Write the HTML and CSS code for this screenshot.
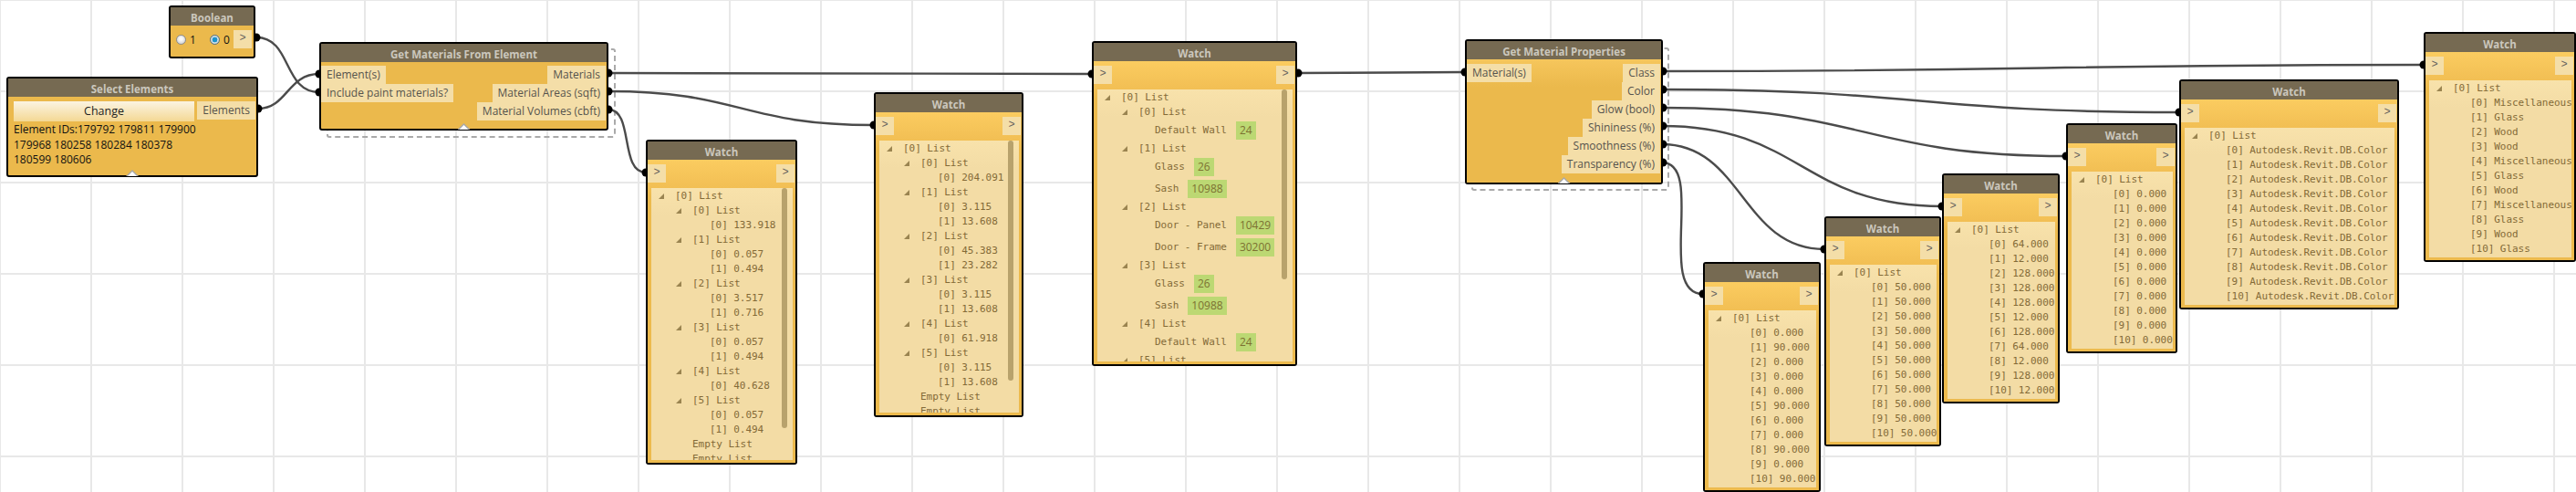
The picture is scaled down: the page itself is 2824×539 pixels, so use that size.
FILE: index.html
```html
<!DOCTYPE html>
<html lang="en">
<head>
  <meta charset="UTF-8">
  <title>Dynamo graph - Get Material Properties</title>
  <link rel="stylesheet" href="styles.css">
</head>
<body>
  <div class="canvas">
    <div class="group group-materials"></div>
    <div class="group group-props"></div>

    <!-- wires sit under the nodes, so only the outer half of each port dot shows -->
    <svg class="wires" width="2824" height="539" viewBox="0 0 2824 539">
      <path d="M281 41 C320 41 310 101 350 101"/>
      <path d="M283 119 C315 119 315 81 350 81"/>
      <path d="M667 80 L1197 81"/>
      <path d="M667 100 C812 100 812 137 958 137"/>
      <path d="M667 120 C695 120 679 189 708 189"/>
      <path d="M1422 80 L1606 79"/>
      <path d="M1822 78 C2240 78 2240 71 2657 71"/>
      <path d="M1822 98 C2105 98 2105 123 2389 123"/>
      <path d="M1822 118 C2043 118 2043 171 2265 171"/>
      <path d="M1822 138 C1975 138 1975 226 2129 226"/>
      <path d="M1822 158 C1910 158 1910 273 2000 273"/>
      <path d="M1822 178 C1870 178 1815 322 1867 322"/>
      <g class="dots">
        <circle cx="281" cy="41" r="4.5"/>
        <circle cx="283" cy="119" r="4.5"/>
        <circle cx="350" cy="81" r="4.5"/>
        <circle cx="350" cy="101" r="4.5"/>
        <circle cx="667" cy="80" r="4.5"/>
        <circle cx="667" cy="100" r="4.5"/>
        <circle cx="667" cy="120" r="4.5"/>
        <circle cx="708" cy="189" r="4.5"/>
        <circle cx="958" cy="137" r="4.5"/>
        <circle cx="1197" cy="81" r="4.5"/>
        <circle cx="1423" cy="80" r="4.5"/>
        <circle cx="1606" cy="79" r="4.5"/>
        <circle cx="1823" cy="78" r="4.5"/>
        <circle cx="1823" cy="98" r="4.5"/>
        <circle cx="1823" cy="118" r="4.5"/>
        <circle cx="1823" cy="138" r="4.5"/>
        <circle cx="1823" cy="158" r="4.5"/>
        <circle cx="1823" cy="178" r="4.5"/>
        <circle cx="1867" cy="322" r="4.5"/>
        <circle cx="2000" cy="273" r="4.5"/>
        <circle cx="2129" cy="226" r="4.5"/>
        <circle cx="2265" cy="171" r="4.5"/>
        <circle cx="2389" cy="123" r="4.5"/>
        <circle cx="2657" cy="71" r="4.5"/>
      </g>
    </svg>

    <div class="node boolean">
      <div class="title">Boolean</div>
      <div class="body boolean-body">
        <span class="radio"></span><span class="radio-label">1</span>
        <span class="radio checked"></span><span class="radio-label">0</span>
        <span class="port arrow">&gt;</span>
      </div>
    </div>

    <div class="node select">
      <div class="title">Select Elements</div>
      <div class="body select-body">
        <div class="select-top">
          <div class="change">Change</div>
          <span class="port">Elements</span>
        </div>
        <p class="ids">Element IDs:179792 179811 179900<br>179968 180258 180284 180378<br>180599 180606</p>
      </div>
      <span class="collapse"></span>
    </div>

    <div class="node materials">
      <div class="title">Get Materials From Element</div>
      <div class="body ports-body">
        <div class="ports ports-in">
          <span class="port">Element(s)</span>
          <span class="port">Include paint materials?</span>
        </div>
        <div class="ports ports-out">
          <span class="port">Materials</span>
          <span class="port">Material Areas (sqft)</span>
          <span class="port">Material Volumes (cbft)</span>
        </div>
      </div>
      <span class="collapse"></span>
    </div>

    <div class="node watch watch-volumes">
      <div class="title">Watch</div>
      <div class="body">
        <div class="watch-ports"><span class="port arrow">&gt;</span><span class="port arrow">&gt;</span></div>
        <div class="panel tall">
          <div class="row lv0 open">[0] List</div>
          <div class="row lv1 open">[0] List</div>
          <div class="row lv2">[0] 133.918</div>
          <div class="row lv1 open">[1] List</div>
          <div class="row lv2">[0] 0.057</div>
          <div class="row lv2">[1] 0.494</div>
          <div class="row lv1 open">[2] List</div>
          <div class="row lv2">[0] 3.517</div>
          <div class="row lv2">[1] 0.716</div>
          <div class="row lv1 open">[3] List</div>
          <div class="row lv2">[0] 0.057</div>
          <div class="row lv2">[1] 0.494</div>
          <div class="row lv1 open">[4] List</div>
          <div class="row lv2">[0] 40.628</div>
          <div class="row lv1 open">[5] List</div>
          <div class="row lv2">[0] 0.057</div>
          <div class="row lv2">[1] 0.494</div>
          <div class="row lv1">Empty List</div>
          <div class="row lv1">Empty List</div>
          <div class="scrollbar bar-long"></div>
        </div>
      </div>
    </div>

    <div class="node watch watch-areas">
      <div class="title">Watch</div>
      <div class="body">
        <div class="watch-ports"><span class="port arrow">&gt;</span><span class="port arrow">&gt;</span></div>
        <div class="panel tall">
          <div class="row lv0 open">[0] List</div>
          <div class="row lv1 open">[0] List</div>
          <div class="row lv2">[0] 204.091</div>
          <div class="row lv1 open">[1] List</div>
          <div class="row lv2">[0] 3.115</div>
          <div class="row lv2">[1] 13.608</div>
          <div class="row lv1 open">[2] List</div>
          <div class="row lv2">[0] 45.383</div>
          <div class="row lv2">[1] 23.282</div>
          <div class="row lv1 open">[3] List</div>
          <div class="row lv2">[0] 3.115</div>
          <div class="row lv2">[1] 13.608</div>
          <div class="row lv1 open">[4] List</div>
          <div class="row lv2">[0] 61.918</div>
          <div class="row lv1 open">[5] List</div>
          <div class="row lv2">[0] 3.115</div>
          <div class="row lv2">[1] 13.608</div>
          <div class="row lv1">Empty List</div>
          <div class="row lv1">Empty List</div>
          <div class="scrollbar bar-long"></div>
        </div>
      </div>
    </div>

    <div class="node watch watch-materials">
      <div class="title">Watch</div>
      <div class="body">
        <div class="watch-ports"><span class="port arrow">&gt;</span><span class="port arrow">&gt;</span></div>
        <div class="panel tall">
          <div class="row lv0 open">[0] List</div>
          <div class="row lv1 open">[0] List</div>
          <div class="row lv2x">Default Wall<span class="chip">24</span></div>
          <div class="row lv1 open">[1] List</div>
          <div class="row lv2x">Glass<span class="chip">26</span></div>
          <div class="row lv2x">Sash<span class="chip">10988</span></div>
          <div class="row lv1 open">[2] List</div>
          <div class="row lv2x">Door - Panel<span class="chip">10429</span></div>
          <div class="row lv2x">Door - Frame<span class="chip">30200</span></div>
          <div class="row lv1 open">[3] List</div>
          <div class="row lv2x">Glass<span class="chip">26</span></div>
          <div class="row lv2x">Sash<span class="chip">10988</span></div>
          <div class="row lv1 open">[4] List</div>
          <div class="row lv2x">Default Wall<span class="chip">24</span></div>
          <div class="row lv1 open">[5] List</div>
          <div class="scrollbar bar-short"></div>
        </div>
      </div>
    </div>

    <div class="node props">
      <div class="title">Get Material Properties</div>
      <div class="body ports-body props-body">
        <div class="ports ports-in">
          <span class="port">Material(s)</span>
        </div>
        <div class="ports ports-out">
          <span class="port">Class</span>
          <span class="port">Color</span>
          <span class="port">Glow (bool)</span>
          <span class="port">Shininess (%)</span>
          <span class="port">Smoothness (%)</span>
          <span class="port">Transparency (%)</span>
        </div>
      </div>
      <span class="collapse"></span>
    </div>

    <div class="node watch watch-transparency">
      <div class="title">Watch</div>
      <div class="body">
        <div class="watch-ports"><span class="port arrow">&gt;</span><span class="port arrow">&gt;</span></div>
        <div class="panel">
          <div class="row lv0 open">[0] List</div>
          <div class="row lv1">[0] 0.000</div>
          <div class="row lv1">[1] 90.000</div>
          <div class="row lv1">[2] 0.000</div>
          <div class="row lv1">[3] 0.000</div>
          <div class="row lv1">[4] 0.000</div>
          <div class="row lv1">[5] 90.000</div>
          <div class="row lv1">[6] 0.000</div>
          <div class="row lv1">[7] 0.000</div>
          <div class="row lv1">[8] 90.000</div>
          <div class="row lv1">[9] 0.000</div>
          <div class="row lv1">[10] 90.000</div>
        </div>
      </div>
    </div>

    <div class="node watch watch-smoothness">
      <div class="title">Watch</div>
      <div class="body">
        <div class="watch-ports"><span class="port arrow">&gt;</span><span class="port arrow">&gt;</span></div>
        <div class="panel">
          <div class="row lv0 open">[0] List</div>
          <div class="row lv1">[0] 50.000</div>
          <div class="row lv1">[1] 50.000</div>
          <div class="row lv1">[2] 50.000</div>
          <div class="row lv1">[3] 50.000</div>
          <div class="row lv1">[4] 50.000</div>
          <div class="row lv1">[5] 50.000</div>
          <div class="row lv1">[6] 50.000</div>
          <div class="row lv1">[7] 50.000</div>
          <div class="row lv1">[8] 50.000</div>
          <div class="row lv1">[9] 50.000</div>
          <div class="row lv1">[10] 50.000</div>
        </div>
      </div>
    </div>

    <div class="node watch watch-shininess">
      <div class="title">Watch</div>
      <div class="body">
        <div class="watch-ports"><span class="port arrow">&gt;</span><span class="port arrow">&gt;</span></div>
        <div class="panel">
          <div class="row lv0 open">[0] List</div>
          <div class="row lv1">[0] 64.000</div>
          <div class="row lv1">[1] 12.000</div>
          <div class="row lv1">[2] 128.000</div>
          <div class="row lv1">[3] 128.000</div>
          <div class="row lv1">[4] 128.000</div>
          <div class="row lv1">[5] 12.000</div>
          <div class="row lv1">[6] 128.000</div>
          <div class="row lv1">[7] 64.000</div>
          <div class="row lv1">[8] 12.000</div>
          <div class="row lv1">[9] 128.000</div>
          <div class="row lv1">[10] 12.000</div>
        </div>
      </div>
    </div>

    <div class="node watch watch-glow">
      <div class="title">Watch</div>
      <div class="body">
        <div class="watch-ports"><span class="port arrow">&gt;</span><span class="port arrow">&gt;</span></div>
        <div class="panel">
          <div class="row lv0 open">[0] List</div>
          <div class="row lv1">[0] 0.000</div>
          <div class="row lv1">[1] 0.000</div>
          <div class="row lv1">[2] 0.000</div>
          <div class="row lv1">[3] 0.000</div>
          <div class="row lv1">[4] 0.000</div>
          <div class="row lv1">[5] 0.000</div>
          <div class="row lv1">[6] 0.000</div>
          <div class="row lv1">[7] 0.000</div>
          <div class="row lv1">[8] 0.000</div>
          <div class="row lv1">[9] 0.000</div>
          <div class="row lv1">[10] 0.000</div>
        </div>
      </div>
    </div>

    <div class="node watch watch-color">
      <div class="title">Watch</div>
      <div class="body">
        <div class="watch-ports"><span class="port arrow">&gt;</span><span class="port arrow">&gt;</span></div>
        <div class="panel">
          <div class="row lv0 open">[0] List</div>
          <div class="row lv1">[0] Autodesk.Revit.DB.Color</div>
          <div class="row lv1">[1] Autodesk.Revit.DB.Color</div>
          <div class="row lv1">[2] Autodesk.Revit.DB.Color</div>
          <div class="row lv1">[3] Autodesk.Revit.DB.Color</div>
          <div class="row lv1">[4] Autodesk.Revit.DB.Color</div>
          <div class="row lv1">[5] Autodesk.Revit.DB.Color</div>
          <div class="row lv1">[6] Autodesk.Revit.DB.Color</div>
          <div class="row lv1">[7] Autodesk.Revit.DB.Color</div>
          <div class="row lv1">[8] Autodesk.Revit.DB.Color</div>
          <div class="row lv1">[9] Autodesk.Revit.DB.Color</div>
          <div class="row lv1">[10] Autodesk.Revit.DB.Color</div>
        </div>
      </div>
    </div>

    <div class="node watch watch-class">
      <div class="title">Watch</div>
      <div class="body">
        <div class="watch-ports"><span class="port arrow">&gt;</span><span class="port arrow">&gt;</span></div>
        <div class="panel">
          <div class="row lv0 open">[0] List</div>
          <div class="row lv1">[0] Miscellaneous</div>
          <div class="row lv1">[1] Glass</div>
          <div class="row lv1">[2] Wood</div>
          <div class="row lv1">[3] Wood</div>
          <div class="row lv1">[4] Miscellaneous</div>
          <div class="row lv1">[5] Glass</div>
          <div class="row lv1">[6] Wood</div>
          <div class="row lv1">[7] Miscellaneous</div>
          <div class="row lv1">[8] Glass</div>
          <div class="row lv1">[9] Wood</div>
          <div class="row lv1">[10] Glass</div>
        </div>
      </div>
    </div>
  </div>
</body>
</html>
```

FILE: styles.css
```css
body {
  margin: 0;
  background: #fff;
  font-family: "Open Sans", "Liberation Sans", sans-serif;
}

.canvas {
  position: relative;
  width: 2824px;
  height: 539px;
  overflow: hidden;
  background-color: #fff;
  background-image:
    linear-gradient(to right, #e8e8e8 2px, transparent 2px),
    linear-gradient(to bottom, #e8e8e8 2px, transparent 2px);
  background-size: 100px 100px;
  background-position: -1px -1px;
}

.wires {
  position: absolute;
  left: 0;
  top: 0;
}

.wires path {
  fill: none;
  stroke: #4b4b4b;
  stroke-width: 2.4;
}

.dots circle {
  fill: #000;
}

/* dashed selection box behind the custom nodes */
.group {
  position: absolute;
  box-sizing: border-box;
  border: 2px dashed #aaa;
  border-radius: 3px;
}

.group-materials { left: 358px; top: 53px; width: 317px; height: 98px; }
.group-props { left: 1613px; top: 52px; width: 217px; height: 157px; }

/* nodes */
.node {
  position: absolute;
  box-sizing: border-box;
  display: flex;
  flex-direction: column;
  border: 2px solid #000;
  border-radius: 3px;
  background: #ebb94c;
}

.title {
  height: 20px;
  line-height: 23px;
  flex: none;
  background: #766a52;
  color: #cbc7bd;
  font-size: 11.5px;
  font-weight: 700;
  text-align: center;
  white-space: nowrap;
}

.body {
  flex: 1;
}

.port {
  display: block;
  height: 20px;
  line-height: 19px;
  padding: 0 6px;
  background: #f4dea8;
  color: #55534d;
  font-size: 12px;
  white-space: nowrap;
}

.port.arrow {
  width: 20px;
  box-sizing: border-box;
  padding: 0;
  text-align: center;
  font-family: "Liberation Mono", monospace;
  font-size: 12px;
  color: #66645e;
}

.collapse {
  position: absolute;
  left: 50%;
  bottom: -1px;
  width: 14px;
  height: 7px;
  margin-left: -7px;
  background: #a8a8a8;
  clip-path: polygon(50% 0, 100% 100%, 0 100%);
}

.collapse::after {
  content: "";
  position: absolute;
  left: 2px;
  top: 2px;
  width: 10px;
  height: 5px;
  background: #fff;
  clip-path: polygon(50% 0, 100% 100%, 0 100%);
}

/* boolean */
.boolean { left: 185px; top: 6px; width: 95px; height: 58px; }

.boolean-body {
  display: flex;
  align-items: center;
  padding: 5px 2px 0 6px;
  align-self: stretch;
}

.boolean-body .port {
  margin-left: auto;
  align-self: flex-start;
}

.radio {
  width: 11px;
  height: 11px;
  box-sizing: border-box;
  border: 1px solid #8a8a8a;
  border-radius: 50%;
  background: radial-gradient(circle at 50% 40%, #fafafa 20%, #c9c9c9 90%);
  margin-bottom: 9px;
}

.radio.checked {
  margin-left: 15px;
  background: radial-gradient(circle at 50% 50%, #1d93cc 42%, #d5e3ea 50%, #a9b9c2 100%);
  border-color: #56707f;
}

.radio-label {
  margin: 0 0 9px 4px;
  font-size: 12px;
  color: #111;
}

/* select elements */
.select { left: 7px; top: 84px; width: 276px; height: 110px; }

.select-body {
  padding: 5px 1px 0 6px;
}

.select-top {
  display: flex;
  justify-content: space-between;
}

.change {
  width: 198px;
  height: 22px;
  line-height: 22px;
  background: linear-gradient(#fbf4e2, #f4d894);
  color: #222;
  font-size: 12.5px;
  text-align: center;
}

.ids {
  margin: 1px 0 0;
  font-size: 12px;
  line-height: 16.5px;
  color: #111;
  white-space: nowrap;
}

/* custom nodes with in and out ports */
.materials { left: 350px; top: 46px; width: 317px; height: 97px; }
.props { left: 1606px; top: 43px; width: 217px; height: 159px; }

.ports-body {
  display: flex;
  justify-content: space-between;
  padding: 4px 1px 0 0;
}

.props-body {
  padding-top: 5px;
  background: linear-gradient(#f6c65c, #ebb94c 30px);
}

.ports {
  display: flex;
  flex-direction: column;
}

.ports-in { align-items: flex-start; }
.ports-out { align-items: flex-end; }

/* watch */
.watch .body {
  background: linear-gradient(#fbcc60, #f2bf54 30px, #ecba4d 40px);
  padding: 5px 1px 3px 0;
}

.watch-ports {
  display: flex;
  justify-content: space-between;
  height: 20px;
}

.panel {
  position: relative;
  height: 194px;
  margin: 6px 2px 0 4px;
  padding-top: 1px;
  box-sizing: border-box;
  overflow: hidden;
  background: linear-gradient(#f8e2ab, #f3dca5 30px);
  font-family: "DejaVu Sans Mono", "Liberation Mono", monospace;
  font-size: 11px;
  letter-spacing: -0.05px;
  color: #836a37;
}

.panel.tall { height: 298px; }

.row {
  position: relative;
  height: 16px;
  line-height: 16px;
  white-space: pre;
}

.lv0 { padding-left: 26px; }
.lv1 { padding-left: 45px; }
.lv2 { padding-left: 64px; }

/* rows with a green count chip are taller than the plain ones */
.lv2x {
  display: flex;
  align-items: center;
  gap: 10px;
  box-sizing: border-box;
  height: 24px;
  padding-left: 63px;
}

.chip {
  height: 20px;
  line-height: 20px;
  padding: 0 4px;
  background: #bcd873;
  color: #7d7132;
  font-family: "Open Sans", sans-serif;
  font-size: 12px;
  letter-spacing: 0;
}

.open::before {
  content: "";
  position: absolute;
  top: 5px;
  width: 6px;
  height: 6px;
  background: #9a8450;
  clip-path: polygon(100% 0, 100% 100%, 0 100%);
}

.lv0.open::before { left: 8px; }
.lv1.open::before { left: 27px; }

.scrollbar {
  position: absolute;
  top: 0;
  right: 6px;
  width: 6px;
  border-radius: 3px;
  background: #b8a26c;
}

.bar-long { height: 263px; }
.bar-short { height: 208px; }

/* where each node sits on the canvas */
.watch-volumes { left: 708px; top: 153px; width: 166px; }
.watch-areas { left: 958px; top: 101px; width: 164px; }
.watch-materials { left: 1197px; top: 45px; width: 225px; }
.watch-transparency { left: 1867px; top: 287px; width: 129px; }
.watch-smoothness { left: 2000px; top: 237px; width: 128px; }
.watch-shininess { left: 2129px; top: 190px; width: 129px; }
.watch-glow { left: 2265px; top: 135px; width: 122px; }
.watch-color { left: 2389px; top: 87px; width: 241px; }
.watch-class { left: 2657px; top: 35px; width: 167px; }
```
